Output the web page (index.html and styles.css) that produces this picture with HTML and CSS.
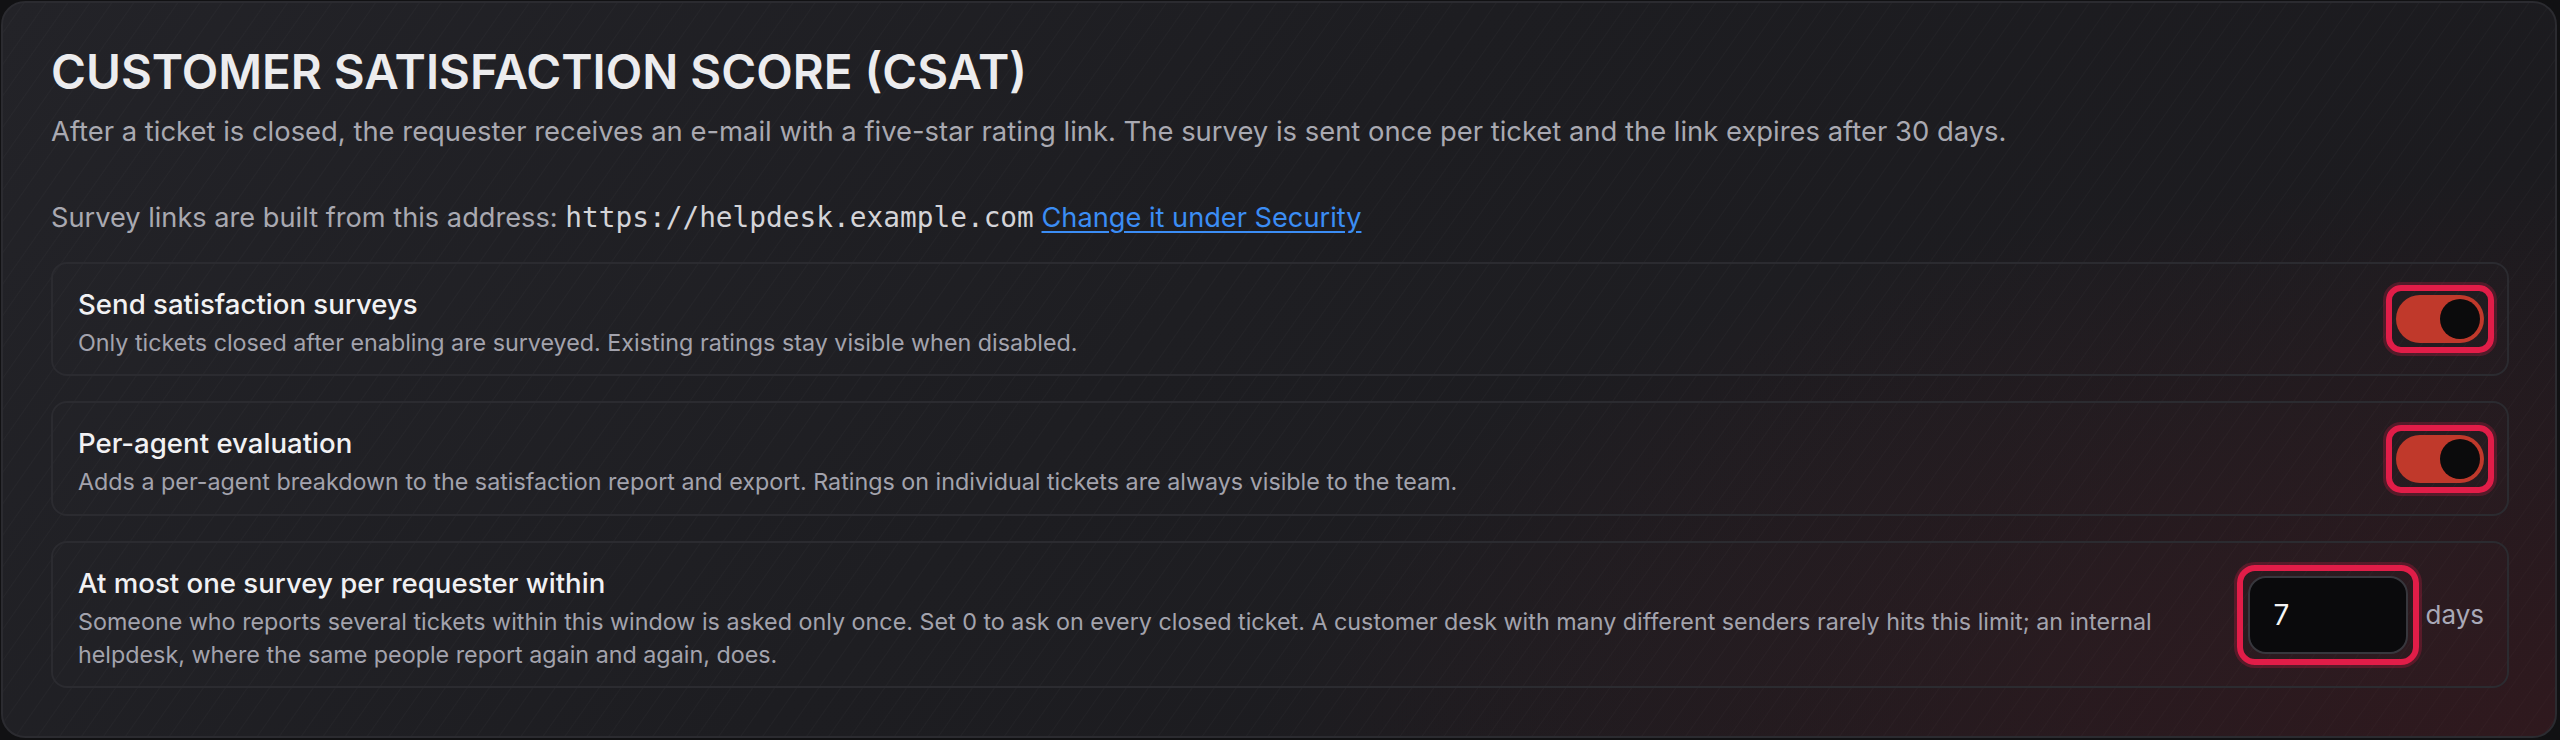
FILE: index.html
```html
<!DOCTYPE html>
<html lang="en">
<head>
<meta charset="utf-8">
<title>CSAT settings</title>
<link rel="stylesheet" href="styles.css">
</head>
<body>
<section class="panel">
  <h1 class="title">CUSTOMER SATISFACTION SCORE (CSAT)</h1>
  <p class="lead">After a ticket is closed, the requester receives an e-mail with a five-star rating link. The survey is sent once per ticket and the link expires after 30 days.</p>
  <p class="address">Survey links are built from this address: <code class="url">https://helpdesk.example.com</code> <a class="link" href="#">Change it under Security</a></p>
  <div class="rows">
    <div class="row">
      <div class="text">
        <div class="label">Send satisfaction surveys</div>
        <div class="hint">Only tickets closed after enabling are surveyed. Existing ratings stay visible when disabled.</div>
      </div>
      <span class="focus"><span class="toggle"><span class="knob"></span></span></span>
    </div>
    <div class="row row-mid">
      <div class="text">
        <div class="label">Per-agent evaluation</div>
        <div class="hint">Adds a per-agent breakdown to the satisfaction report and export. Ratings on individual tickets are always visible to the team.</div>
      </div>
      <span class="focus"><span class="toggle"><span class="knob"></span></span></span>
    </div>
    <div class="row row-tall">
      <div class="text">
        <div class="label">At most one survey per requester within</div>
        <div class="hint">Someone who reports several tickets within this window is asked only once. Set 0 to ask on every closed ticket. A customer desk with many different senders rarely hits this limit; an internal helpdesk, where the same people report again and again, does.</div>
      </div>
      <div class="field">
        <span class="focus focus-input"><span class="input">7</span></span>
        <span class="unit">days</span>
      </div>
    </div>
  </div>
</section>
</body>
</html>
```
FILE: styles.css
```css
html, body {
  margin: 0;
  padding: 0;
  background: #111113;
}
body {
  padding: 1px 3px 2px 1px;
  font-family: Inter, "Noto Sans", sans-serif;
}
.panel {
  box-sizing: border-box;
  height: 737px;
  border: 2px solid #2b2b30;
  border-radius: 24px;
  padding: 41px 46px 0 48px;
  background-color: #1c1c20;
  background-image:
    radial-gradient(ellipse 1300px 560px at 100% 100%, rgba(100, 22, 30, 0.28), rgba(100, 22, 30, 0) 100%),
    repeating-linear-gradient(125deg, rgba(255,255,255,0) 0px, rgba(255,255,255,0) 16px, rgba(255,255,255,0.025) 17px, rgba(255,255,255,0) 18px),
    linear-gradient(135deg, #232328 0%, #1d1d21 45%, #1b1a1e 100%);
}
.title {
  margin: 0;
  font-size: 47.5px;
  line-height: 56px;
  font-weight: 600;
  color: #ececee;
  letter-spacing: 0;
}
.lead {
  margin: 14px 0 0;
  font-size: 27.4px;
  line-height: 34px;
  color: #a9a9b1;
}
.address {
  margin: 53px 0 0;
  font-size: 27.2px;
  line-height: 34px;
  color: #a9a9b1;
}
.url {
  font-family: "DejaVu Sans Mono", monospace;
  font-size: 27.8px;
  color: #d4d4d8;
}
.link {
  color: #3b8df5;
  text-decoration: underline;
  text-underline-offset: 4px;
}
.rows {
  margin-top: 27px;
  display: flex;
  flex-direction: column;
  gap: 25px;
}
.row {
  box-sizing: border-box;
  min-height: 114px;
  border: 2px solid #2b2b30;
  border-radius: 16px;
  background: rgba(255, 255, 255, 0.008);
  padding: 14px 23px 14px 25px;
  display: flex;
  align-items: center;
  gap: 36px;
}
.row-mid {
  min-height: 115px;
}
.row-tall {
  min-height: 147px;
}
.text {
  flex: 1;
  min-width: 0;
  padding-top: 6px;
}
.label {
  font-size: 27.6px;
  line-height: 36px;
  font-weight: 500;
  color: #f1f1f3;
}
.hint {
  margin-top: 4px;
  font-size: 23.3px;
  line-height: 33px;
  color: #a3a3ad;
}
.focus {
  display: inline-flex;
  margin: -10px;
  padding: 4px;
  border: 6px solid #e11d48;
  border-radius: 15px;
  box-shadow: 0 0 0 3px rgba(225, 29, 72, 0.25);
  flex: none;
}
.toggle {
  position: relative;
  display: block;
  width: 88px;
  height: 48px;
  border-radius: 24px;
  background: #c0392b;
}
.knob {
  position: absolute;
  top: 4px;
  right: 4px;
  width: 40px;
  height: 40px;
  border-radius: 50%;
  background: #0b0b0c;
}
.field {
  display: flex;
  align-items: center;
  gap: 18px;
  flex: none;
}
.focus-input {
  margin: -11px;
  padding: 5px;
  border-radius: 18px;
}
.input {
  box-sizing: border-box;
  width: 160px;
  height: 78px;
  border: 2px solid #37373d;
  border-radius: 18px;
  background: #0a0a0c;
  color: #f4f4f5;
  font-size: 28px;
  line-height: 74px;
  padding-left: 24px;
}
.unit {
  font-size: 26px;
  color: #a9a9b8;
}
```
